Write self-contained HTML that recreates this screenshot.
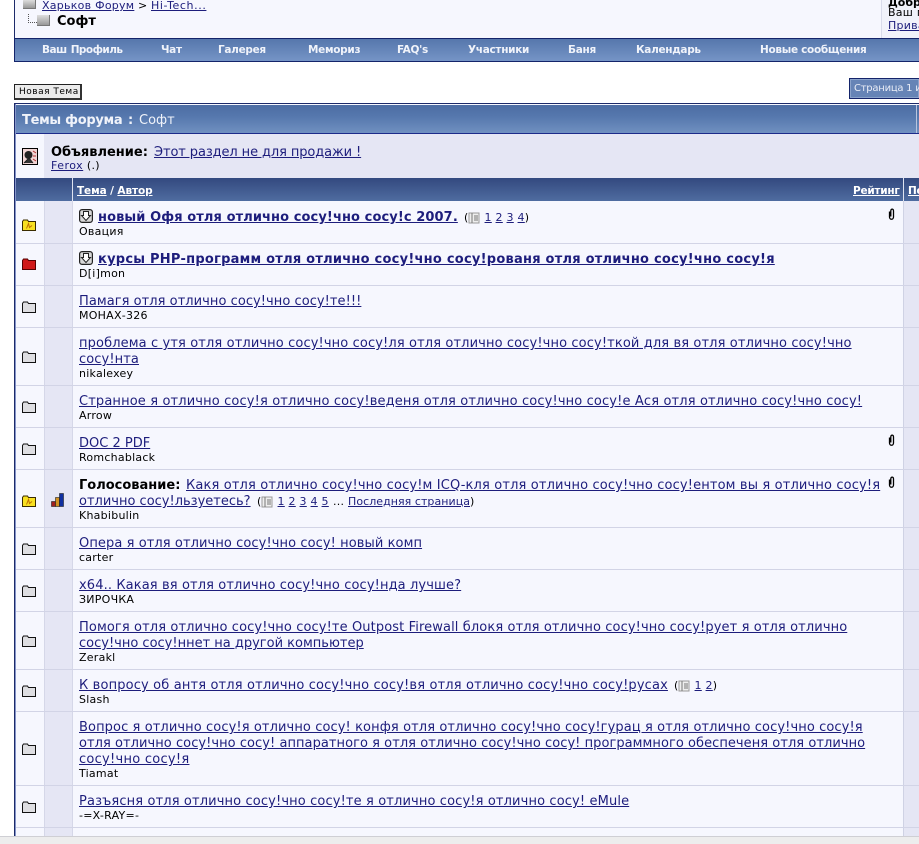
<!DOCTYPE html>
<html lang="ru"><head><meta charset="utf-8"><title>Софт</title>
<style>
html,body{margin:0;padding:0;background:#fff;}
body{position:relative;width:919px;height:844px;overflow:hidden;font-family:"DejaVu Sans","Liberation Sans",sans-serif;color:#000;}
.b{position:absolute;}
.t{position:absolute;white-space:nowrap;line-height:16px;font-size:13px;}
.s{font-size:11px;letter-spacing:.25px;}
.p{font-size:11px;letter-spacing:.25px;}
a{color:#1d1d7c;text-decoration:underline;}
.n{position:absolute;top:44px;line-height:13px;font-size:10.5px;letter-spacing:-.3px;font-weight:bold;color:#f0f3fa;white-space:nowrap;}
.h a{color:#fff;}
.h{font-size:10.5px;letter-spacing:-.25px;font-weight:bold;color:#fff;}
.l{position:absolute;left:16px;width:903px;height:1px;background:#d2d4e6;}
svg{position:absolute;}
</style></head><body>
<svg width="0" height="0" style="position:absolute"><defs>
<g id="fg"><path d="M.5 12.500V3.500L1.500 2H5.500L6.500 3.500H13.500V12.500Z" stroke="#111" fill="#dedee2"/></g>
<g id="fy"><path d="M.5 12.500V3.500L1.500 2H5.500L6.500 3.500H13.500V12.500Z" stroke="#3a2c00" fill="#f8e020"/><path d="M4.500 10.500L6.500 5.500L7.500 9.500L10 7.500" stroke="#c07000" fill="none"/></g>
<g id="fr"><path d="M.5 12.500V3.500L1.500 2H5.500L6.500 3.500H13.500V12.500Z" stroke="#500" fill="#d01818"/></g>
<g id="ar"><rect x=".6" y=".6" width="12.800" height="12.800" rx="2.500" fill="#d8d8d8" stroke="#222" stroke-width="1.200"/><path d="M4.500 2.500H9.500V6.500H11.500L7 11.500L2.500 6.500H4.500Z" fill="#fff" stroke="#222"/></g>
<g id="clip"><path d="M1.500 3.500V9C1.500 12 5.500 12 5.500 9V3C5.500 .5 2.800 .5 2.800 3V8.500" fill="none" stroke="#000" stroke-width="1.300"/></g>
<g id="pg"><rect x="1" y="1" width="10" height="10" fill="#eee" stroke="#999"/><path d="M4 1V11M6 4H10M6 6H10M6 8H10" stroke="#777"/></g>
</defs></svg>

<!-- header -->
<div class="b" style="left:14px;top:0;width:905px;height:38px;background:#f6f7fe;border-left:1px solid #1c2a6a;box-sizing:border-box"></div>
<div class="b" style="left:881px;top:0;width:1px;height:38px;background:#d9dbea"></div>
<div class="b" style="left:882px;top:0;width:37px;height:38px;background:#f1f2fa"></div>
<div class="b" style="left:23px;top:0;width:13px;height:9px;background:linear-gradient(#ddd,#999);border-right:1px solid #777;border-bottom:1px solid #777;box-sizing:border-box"></div>
<div class="b" style="left:42px;top:0;width:170px;height:12px;overflow:hidden"><div class="t s" style="left:0;top:-2px"><a href="#">Харьков Форум</a></div><div class="t s" style="left:96px;top:-2px">&gt;</div><div class="t s" style="left:109px;top:-2px;letter-spacing:.6px"><a href="#">Hi-Tech...</a></div></div>
<div class="b" style="left:28px;top:14px;width:9px;height:9px;border-left:1px dotted #555;border-bottom:1px dotted #555;box-sizing:border-box"></div>
<div class="b" style="left:37px;top:15px;width:13px;height:11px;background:linear-gradient(#ddd,#999);border-right:1px solid #777;border-bottom:1px solid #777;box-sizing:border-box"></div>
<div class="t" style="left:57px;top:14px;font-weight:bold">Софт</div>
<div class="b" style="left:888px;top:0;width:31px;height:38px;overflow:hidden">
<div class="t" style="left:0;top:-5px;font-weight:bold;font-size:11px">Добро</div>
<div class="t s" style="left:0;top:5px">Ваш последний</div>
<div class="t s" style="left:0;top:18px"><a href="#">Приватные</a></div>
</div>

<!-- nav -->
<div class="b" style="left:14px;top:38px;width:905px;height:24px;box-sizing:border-box;border:1px solid #14246a;border-right:0;background:linear-gradient(#5677ac,#7594c6)"></div>
<div class="n" style="left:42px;word-spacing:1px;letter-spacing:-.55px">Ваш Профиль</div>
<div class="n" style="left:161px">Чат</div>
<div class="n" style="left:218px">Галерея</div>
<div class="n" style="left:308px">Мемориз</div>
<div class="n" style="left:397px">FAQ's</div>
<div class="n" style="left:468px">Участники</div>
<div class="n" style="left:568px">Баня</div>
<div class="n" style="left:636px">Календарь</div>
<div class="n" style="left:760px">Новые сообщения</div>

<!-- buttons -->
<div class="b" style="left:14px;top:84px;width:68px;height:16px;box-sizing:border-box;border:1px solid #222;border-right:2px solid #333;border-bottom:2px solid #333;background:#ebebeb"></div>
<div class="t" style="left:19px;top:84px;font-size:9px;letter-spacing:.5px">Новая Тема</div>
<div class="b" style="left:849px;top:78px;width:70px;height:21px;box-sizing:border-box;border:1px solid #14246a;border-right:0;background:#6684b6;box-shadow:inset 0 0 0 1px #8ba3cb"></div>
<div class="b" style="left:850px;top:79px;width:69px;height:19px;overflow:hidden"><div class="t" style="left:4px;top:2px;color:#e9edf7;font-size:10px;letter-spacing:-.25px">Страница 1 из</div></div>

<!-- table frame -->
<div class="b" style="left:14px;top:103px;width:905px;height:733px;box-sizing:border-box;border-left:1px solid #1c2a6a;border-top:1px solid #1c2a6a;background:#f6f7fe"></div>
<div class="b" style="left:15px;top:104px;width:1px;height:732px;background:#8494c8"></div>
<div class="b" style="left:16px;top:105px;width:903px;height:29px;background:linear-gradient(#4d6da3 0%,#5577ad 40%,#7090c0 100%);border-bottom:1px solid #1c2a8a;box-sizing:border-box"></div>
<div class="b" style="left:916px;top:105px;width:1px;height:28px;background:#b9c5dd"></div>
<div class="t" style="left:22px;top:113px;color:#f0f3fa;font-weight:bold;letter-spacing:-.3px">Темы форума</div>
<div class="t" style="left:128px;top:113px;color:#f0f3fa;font-weight:bold">:</div>
<div class="t" style="left:139px;top:113px;color:#f0f3fa">Софт</div>

<!-- announcement -->
<div class="b" style="left:16px;top:134px;width:903px;height:44px;background:#e5e6f4"></div>
<div class="b" style="left:16px;top:134px;width:28px;height:44px;background:#f6f7fe"></div>
<svg style="left:22px;top:148px" width="16" height="18"><rect x=".5" y=".5" width="15" height="16" fill="#f0d4d4" stroke="#000"/><circle cx="6.500" cy="7" r="4" fill="#222"/><path d="M2 15L7 10L11 15" fill="#333" stroke="#222"/><path d="M11 3L14 5M11 8H14M11 11L14 13" stroke="#b03030" fill="none"/></svg>
<div class="t" style="left:51px;top:145px"><b>Объявление:</b></div>
<div class="t" style="left:154px;top:145px;letter-spacing:-.1px"><a href="#">Этот раздел не для продажи !</a></div>
<div class="t s" style="left:51px;top:158px"><a href="#" style="letter-spacing:.5px">Ferox</a> (.)</div>

<!-- columns header -->
<div class="b" style="left:16px;top:178px;width:903px;height:23px;background:linear-gradient(#33497f,#4f6ca0)"></div>
<div class="b" style="left:72px;top:178px;width:1px;height:23px;background:#dfe3f0"></div>
<div class="b" style="left:903px;top:178px;width:1px;height:23px;background:#dfe3f0"></div>
<div class="t h" style="left:77px;top:183px;letter-spacing:-.1px"><a href="#">Тема</a> / <a href="#">Автор</a></div>
<div class="t h" style="left:853px;top:183px"><a href="#">Рейтинг</a></div>
<div class="b" style="left:904px;top:178px;width:15px;height:23px;overflow:hidden"><div class="t h" style="left:4px;top:5px"><a href="#">Последний</a></div></div>

<!-- columns -->
<div class="b" style="left:44px;top:201px;width:1px;height:635px;background:#d5d7e8"></div>
<div class="b" style="left:45px;top:201px;width:27px;height:635px;background:#e5e6f4"></div>
<div class="b" style="left:72px;top:201px;width:1px;height:635px;background:#d5d7e8"></div>
<div class="b" style="left:903px;top:201px;width:1px;height:635px;background:#cfd2e4"></div>
<div class="b" style="left:904px;top:201px;width:15px;height:635px;background:#e5e6f4"></div>

<!-- row lines -->
<div class="l" style="top:243px"></div>
<div class="l" style="top:285px"></div>
<div class="l" style="top:327px"></div>
<div class="l" style="top:385px"></div>
<div class="l" style="top:427px"></div>
<div class="l" style="top:469px"></div>
<div class="l" style="top:527px"></div>
<div class="l" style="top:569px"></div>
<div class="l" style="top:611px"></div>
<div class="l" style="top:669px"></div>
<div class="l" style="top:711px"></div>
<div class="l" style="top:785px"></div>
<div class="l" style="top:827px"></div>

<!-- folder icons -->
<svg style="left:22px;top:218px" width="14" height="14"><use href="#fy"/></svg>
<svg style="left:22px;top:257px" width="14" height="14"><use href="#fr"/></svg>
<svg style="left:22px;top:300px" width="14" height="14"><use href="#fg"/></svg>
<svg style="left:22px;top:350px" width="14" height="14"><use href="#fg"/></svg>
<svg style="left:22px;top:400px" width="14" height="14"><use href="#fg"/></svg>
<svg style="left:22px;top:442px" width="14" height="14"><use href="#fg"/></svg>
<svg style="left:22px;top:494px" width="14" height="14"><use href="#fy"/></svg>
<svg style="left:22px;top:542px" width="14" height="14"><use href="#fg"/></svg>
<svg style="left:22px;top:584px" width="14" height="14"><use href="#fg"/></svg>
<svg style="left:22px;top:634px" width="14" height="14"><use href="#fg"/></svg>
<svg style="left:22px;top:684px" width="14" height="14"><use href="#fg"/></svg>
<svg style="left:22px;top:742px" width="14" height="14"><use href="#fg"/></svg>
<svg style="left:22px;top:800px" width="14" height="14"><use href="#fg"/></svg>
<svg style="left:51px;top:493px" width="14" height="14"><rect x=".5" y="8.500" width="4" height="5" fill="#a02020" stroke="#222" stroke-width=".6"/><rect x="4.500" y="4.500" width="4" height="9" fill="#d09020" stroke="#222" stroke-width=".6"/><rect x="8.500" y=".5" width="4" height="13" fill="#1030a0" stroke="#222" stroke-width=".6"/></svg>

<!-- row 1 -->
<svg style="left:79px;top:209px" width="14" height="14"><use href="#ar"/></svg>
<div class="t" style="left:98px;top:210px;letter-spacing:.09px"><a href="#"><b>новый Офя отля отлично сосу!чно сосу!с 2007.</b></a></div>
<div class="t p" style="left:464px;top:210px">(<span style="display:inline-block;width:16px"></span><a href="#">1</a> <a href="#">2</a> <a href="#">3</a> <a href="#">4</a>)</div>
<svg style="left:468px;top:212px" width="12" height="12"><use href="#pg"/></svg>
<svg style="left:888px;top:208px" width="8" height="13"><use href="#clip"/></svg>
<div class="t s" style="left:79px;top:224px">Овация</div>
<!-- row 2 -->
<svg style="left:79px;top:251px" width="14" height="14"><use href="#ar"/></svg>
<div class="t" style="left:98px;top:252px;letter-spacing:.24px"><a href="#"><b>курсы PHP-программ отля отлично сосу!чно сосу!рованя отля отлично сосу!чно сосу!я</b></a></div>
<div class="t s" style="left:79px;top:266px">D[i]mon</div>
<!-- row 3 -->
<div class="t" style="left:79px;top:294px;letter-spacing:.05px"><a href="#">Памагя отля отлично сосу!чно сосу!те!!!</a></div>
<div class="t s" style="left:79px;top:308px">МОНАХ-326</div>
<!-- row 4 -->
<div class="t" style="left:79px;top:336px;letter-spacing:.12px"><a href="#">проблема с утя отля отлично сосу!чно сосу!ля отля отлично сосу!чно сосу!ткой для вя отля отлично сосу!чно</a></div>
<div class="t" style="left:79px;top:352px;letter-spacing:.1px"><a href="#">сосу!нта</a></div>
<div class="t s" style="left:79px;top:366px">nikalexey</div>
<!-- row 5 -->
<div class="t" style="left:79px;top:394px;letter-spacing:.14px"><a href="#">Странное я отлично сосу!я отлично сосу!веденя отля отлично сосу!чно сосу!е Ася отля отлично сосу!чно сосу!</a></div>
<div class="t s" style="left:79px;top:408px">Arrow</div>
<!-- row 6 -->
<div class="t" style="left:79px;top:436px"><a href="#">DOC 2 PDF</a></div>
<svg style="left:888px;top:434px" width="8" height="13"><use href="#clip"/></svg>
<div class="t s" style="left:79px;top:450px">Romchablack</div>
<!-- row 7 -->
<div class="t" style="left:79px;top:478px"><b>Голосование:</b></div>
<div class="t" style="left:186px;top:478px;letter-spacing:.145px"><a href="#">Какя отля отлично сосу!чно сосу!м ICQ-кля отля отлично сосу!чно сосу!ентом вы я отлично сосу!я</a></div>
<svg style="left:888px;top:476px" width="8" height="13"><use href="#clip"/></svg>
<div class="t" style="left:79px;top:494px"><a href="#">отлично сосу!льзуетесь?</a></div>
<div class="t p" style="left:257px;top:494px">(<span style="display:inline-block;width:16px"></span><a href="#">1</a> <a href="#">2</a> <a href="#">3</a> <a href="#">4</a> <a href="#">5</a></div>
<div class="t p" style="left:333px;top:494px">...</div>
<div class="t p" style="left:348px;top:494px;letter-spacing:.05px"><a href="#">Последняя страница</a>)</div>
<svg style="left:261px;top:496px" width="12" height="12"><use href="#pg"/></svg>
<div class="t s" style="left:79px;top:508px">Khabibulin</div>
<!-- row 8 -->
<div class="t" style="left:79px;top:536px;letter-spacing:.085px"><a href="#">Опера я отля отлично сосу!чно сосу! новый комп</a></div>
<div class="t s" style="left:79px;top:550px">carter</div>
<!-- row 9 -->
<div class="t" style="left:79px;top:578px;letter-spacing:.115px"><a href="#">x64.. Какая вя отля отлично сосу!чно сосу!нда лучше?</a></div>
<div class="t s" style="left:79px;top:592px">ЗИРОЧКА</div>
<!-- row 10 -->
<div class="t" style="left:79px;top:620px;letter-spacing:.11px"><a href="#">Помогя отля отлично сосу!чно сосу!те Outpost Firewall блокя отля отлично сосу!чно сосу!рует я отля отлично</a></div>
<div class="t" style="left:79px;top:636px"><a href="#">сосу!чно сосу!ннет на другой компьютер</a></div>
<div class="t s" style="left:79px;top:650px">Zerakl</div>
<!-- row 11 -->
<div class="t" style="left:79px;top:678px;letter-spacing:.15px"><a href="#">К вопросу об антя отля отлично сосу!чно сосу!вя отля отлично сосу!чно сосу!русах</a></div>
<div class="t p" style="left:674px;top:678px">(<span style="display:inline-block;width:16px"></span><a href="#">1</a> <a href="#">2</a>)</div>
<svg style="left:678px;top:680px" width="12" height="12"><use href="#pg"/></svg>
<div class="t s" style="left:79px;top:692px">Slash</div>
<!-- row 12 -->
<div class="t" style="left:79px;top:720px;letter-spacing:.1px"><a href="#">Вопрос я отлично сосу!я отлично сосу! конфя отля отлично сосу!чно сосу!гурац я отля отлично сосу!чно сосу!я</a></div>
<div class="t" style="left:79px;top:736px;letter-spacing:.05px"><a href="#">отля отлично сосу!чно сосу! аппаратного я отля отлично сосу!чно сосу! программного обеспеченя отля отлично</a></div>
<div class="t" style="left:79px;top:752px;letter-spacing:.27px"><a href="#">сосу!чно сосу!я</a></div>
<div class="t s" style="left:79px;top:766px">Tiamat</div>
<!-- row 13 -->
<div class="t" style="left:79px;top:794px;letter-spacing:.13px"><a href="#">Разъясня отля отлично сосу!чно сосу!те я отлично сосу!я отлично сосу! eMule</a></div>
<div class="t s" style="left:79px;top:808px">-=X-RAY=-</div>

<!-- bottom strip -->
<div class="b" style="left:0;top:836px;width:919px;height:8px;background:#ededed;border-top:1px solid #cfcfd4;box-sizing:border-box"></div>
</body></html>
